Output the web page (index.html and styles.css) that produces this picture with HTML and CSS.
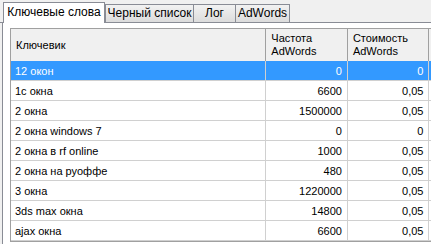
FILE: index.html
```html
<!DOCTYPE html>
<html lang="ru">
<head>
  <meta charset="UTF-8" />
  <title>Ключевые слова</title>
  <link rel="stylesheet" href="styles.css">
</head>
<body>
  <div class="tabs">
    <div class="tab active t-keys">Ключевые слова</div>
    <div class="tab t-black">Черный список</div>
    <div class="tab t-log">Лог</div>
    <div class="tab t-ads">AdWords</div>
  </div>
  <div class="page">
    <div class="grid-wrap">
      <table class="grid">
        <colgroup>
          <col class="c-key"><col class="c-num"><col class="c-num"><col class="c-num">
        </colgroup>
        <thead>
          <tr>
            <th>Ключевик</th>
            <th>Частота<br>AdWords</th>
            <th>Стоимость<br>AdWords</th>
            <th>Частота<br>Wordstat</th>
          </tr>
        </thead>
        <tbody>
          <tr class="selected"><td>12 окон</td><td class="num">0</td><td class="num">0</td><td></td></tr>
          <tr><td>1с окна</td><td class="num">6600</td><td class="num">0,05</td><td></td></tr>
          <tr><td>2 окна</td><td class="num">1500000</td><td class="num">0,05</td><td></td></tr>
          <tr><td>2 окна windows 7</td><td class="num">0</td><td class="num">0</td><td></td></tr>
          <tr><td>2 окна в rf online</td><td class="num">1000</td><td class="num">0,05</td><td></td></tr>
          <tr><td>2 окна на руоффе</td><td class="num">480</td><td class="num">0,05</td><td></td></tr>
          <tr><td>3 окна</td><td class="num">1220000</td><td class="num">0,05</td><td></td></tr>
          <tr><td>3ds max окна</td><td class="num">14800</td><td class="num">0,05</td><td></td></tr>
          <tr><td>ajax окна</td><td class="num">6600</td><td class="num">0,05</td><td></td></tr>
        </tbody>
      </table>
    </div>
  </div>
</body>
</html>
```

FILE: styles.css
```css
body {
  margin: 0;
  width: 431px;
  height: 244px;
  overflow: hidden;
  background: #f0f0f0;
  font-family: "Liberation Sans", Arial, sans-serif;
  font-size: 11px;
  color: #000;
}
.tabs {
  display: flex;
  align-items: flex-end;
  height: 23px;
  padding-left: 3px;
  border-bottom: 1px solid #898c95;
  box-sizing: border-box;
}
.tab {
  height: 18px;
  line-height: 17px;
  font-size: 12px;
  text-align: center;
  margin-right: -1px;
  border: 1px solid #898c95;
  border-bottom: none;
  background: linear-gradient(#f2f2f2, #dcdcdc);
  box-sizing: border-box;
}
.tab.active {
  position: relative;
  height: 21px;
  line-height: 19px;
  margin-bottom: -1px;
  margin-right: 0;
  background: #fff;
  z-index: 1;
}
.t-keys { width: 102px; }
.t-black { width: 89px; }
.t-log { width: 43px; }
.t-ads { width: 55px; }
.page {
  height: 221px;
  margin-left: 2px;
  border-left: 1px solid #898c95;
  background: #fff;
  padding: 5px 0 0 7px;
  box-sizing: border-box;
}
.grid-wrap {
  background: #f0f0f0;
  border: 1px solid #a0a0a0;
  border-right: none;
  overflow: hidden;
}
.grid {
  border-collapse: collapse;
  table-layout: fixed;
  width: 500px;
}
.c-key { width: 250px; }
.c-num { width: 80px; }
.grid th {
  height: 32px;
  padding: 0 5px;
  text-align: left;
  font-weight: normal;
  line-height: 13px;
  background: #f0f0f0;
  border-right: 1px solid #a0a0a0;
  vertical-align: middle;
}
.grid td {
  height: 19px;
  padding: 0 4px;
  background: #fff;
  border-right: 1px solid #d0d0d0;
  border-bottom: 1px solid #d0d0d0;
  white-space: nowrap;
}
.grid td.num {
  text-align: right;
  padding-right: 5px;
}
.grid tr.selected td {
  background: #3399ff;
  color: #fff;
}
```
